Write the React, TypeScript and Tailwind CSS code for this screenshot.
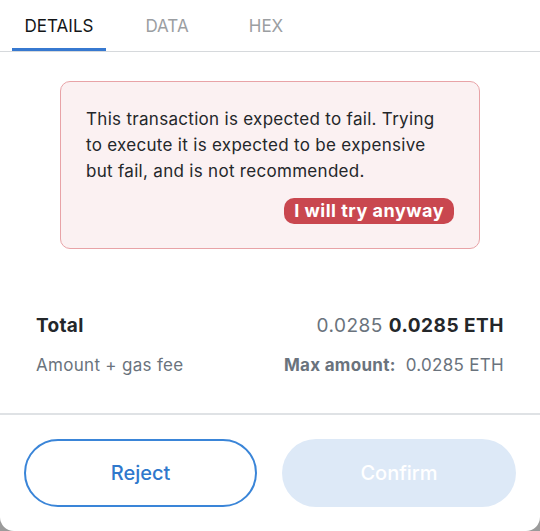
import type { ReactNode } from "react";

const font = { fontFamily: "Inter, 'Noto Sans', sans-serif" };

function Tab({ label, active, width }: { label: string; active?: boolean; width: string }) {
  return (
    <div
      className={`flex h-[51px] items-center justify-center border-b-[3px] pt-[5px] text-[17px] ${width} ${
        active ? "border-[#3779d0] text-[#141618]" : "border-transparent text-[#9b9ea2]"
      }`}
    >
      {label}
    </div>
  );
}

function Row({ left, right, className }: { left: ReactNode; right: ReactNode; className?: string }) {
  return (
    <div className={`flex items-center justify-between ${className ?? ""}`}>
      {left}
      {right}
    </div>
  );
}

export default function App() {
  return (
    <div className="h-[531px] w-[540px] bg-[#9b9b9b]" style={font}>
      <div className="flex h-full w-full flex-col rounded-b-[14px] bg-white">
        <div className="flex border-b border-[#d6d9dc] pl-3">
          <Tab label="DETAILS" active width="w-[94px]" />
          <Tab label="DATA" width="w-[122px]" />
          <Tab label="HEX" width="w-[76px]" />
        </div>

        <div className="mx-[60px] mt-[29px] flex h-[168px] flex-col rounded-[10px] border border-[#e8a3a7] bg-[#fbf1f2] px-[25px] pt-6">
          <p className="text-[17px] leading-[26px] tracking-[0.3px] text-[#24272a]">
            This transaction is expected to fail. Trying
            <br />
            to execute it is expected to be expensive
            <br />
            but fail, and is not recommended.
          </p>
          <div className="mt-[14px] flex justify-end">
            <button className="h-[26px] rounded-[10px] bg-[#c9474f] px-[10px] text-[18px] font-bold leading-[26px] tracking-[0.5px] text-white">
              I will try anyway
            </button>
          </div>
        </div>

        <div className="mt-[63px] px-9">
          <Row
            left={<span className="text-[19px] font-bold tracking-[0.3px] text-[#24272a]">Total</span>}
            right={
              <span className="text-[19px] tracking-[0.5px] text-[#6a737d]">
                0.0285 <span className="font-bold text-[#24272a]">0.0285 ETH</span>
              </span>
            }
          />
          <Row
            className="mt-[12px]"
            left={<span className="text-[17px] tracking-[0.3px] text-[#6a737d]">Amount + gas fee</span>}
            right={
              <span className="text-[17px] tracking-[0.3px] text-[#6a737d]">
                <span className="font-bold">Max amount:</span>
                <span className="ml-[10px]">0.0285 ETH</span>
              </span>
            }
          />
        </div>

        <div className="mt-[35px] border-t-2 border-[#dfe2e5]" />

        <div className="mt-[24px] flex gap-[25px] px-6">
          <button className="h-[68px] w-[233px] rounded-full border-2 border-[#3a85d8] text-[20px] font-medium text-[#2f78cc]">
            Reject
          </button>
          <button className="h-[68px] w-[234px] rounded-full bg-[#dde9f7] text-[20px] font-medium text-white">
            Confirm
          </button>
        </div>
      </div>
    </div>
  );
}
